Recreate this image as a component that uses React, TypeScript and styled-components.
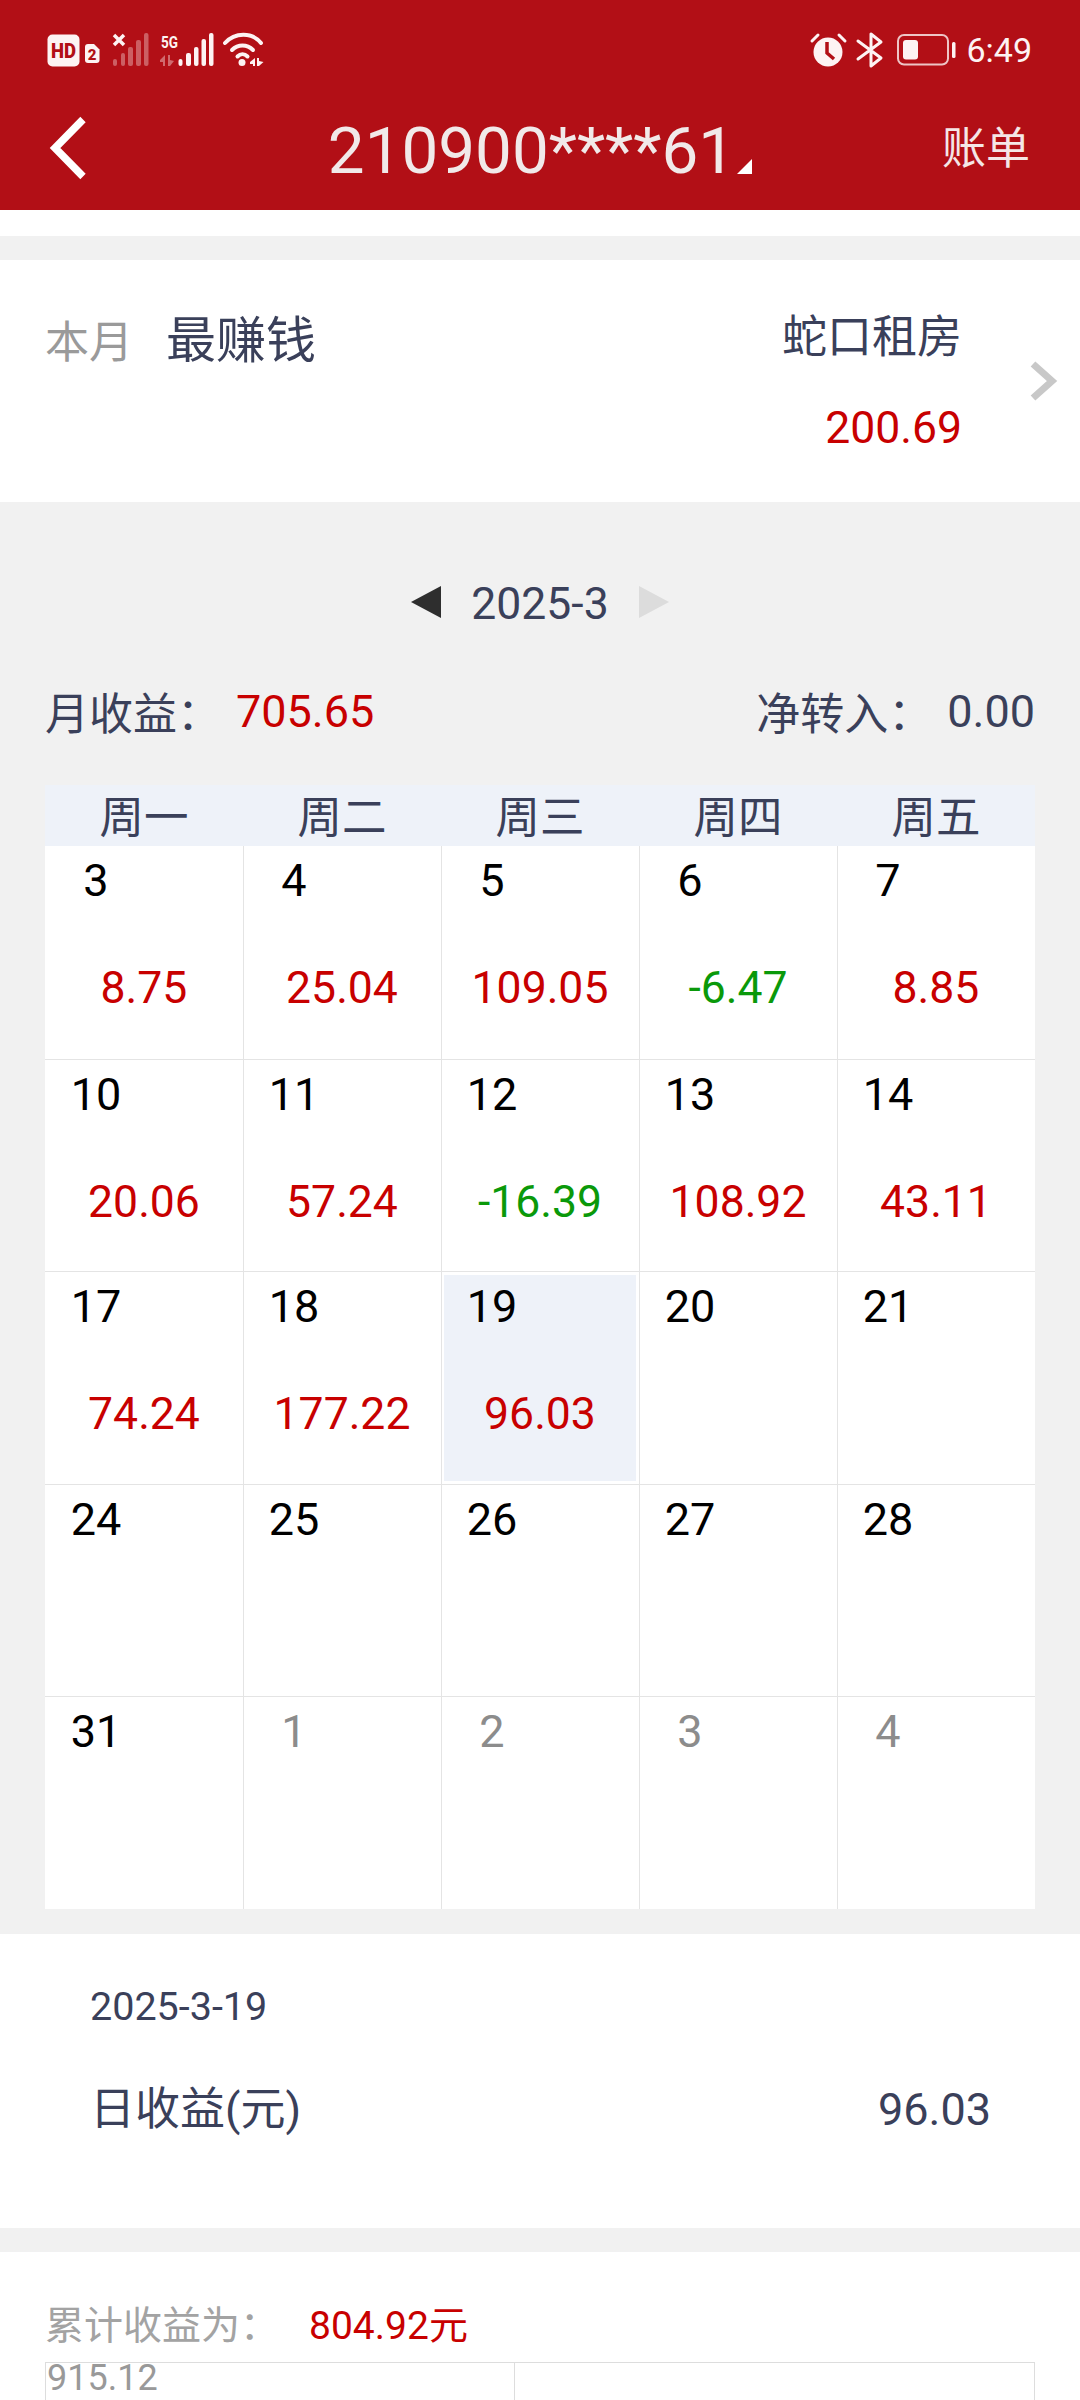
import React from "react";
import styled, { createGlobalStyle } from "styled-components";

const Global = createGlobalStyle`
  html, body { margin: 0; padding: 0; background: #f1f1f1; }
  body { font-family: Roboto, "Noto Sans CJK SC", sans-serif; }
  #root { width: 1080px; height: 2400px; overflow: hidden; }
`;

const NAVY = "#3a405a";
const RED = "#c80000";
const GREEN = "#0a990a";

const Page = styled.div`
  width: 1080px;
  height: 2400px;
  overflow: hidden;
  background: #f1f1f1;
  display: flex;
  flex-direction: column;
`;
const Header = styled.header`
  height: 210px;
  background: #b20f16;
  display: flex;
  flex-direction: column;
  flex: none;
`;
const StatusBar = styled.div`
  height: 100px;
  display: flex;
  align-items: center;
  justify-content: space-between;
  padding: 0 48px 0 47px;
`;
const StatusGroup = styled.div`
  display: flex;
  align-items: center;
`;
const Clock = styled.span`
  font-size: 34px;
  color: #fdf3f3;
  margin-left: 10px;
  line-height: 1;
`;
const Nav = styled.nav`
  height: 96px;
  display: flex;
  align-items: center;
  padding: 0 50px 0 49px;
`;
const Title = styled.div`
  flex: 1;
  display: flex;
  justify-content: center;
  align-items: flex-end;
  color: #f1e9e9;
  font-size: 65.500px;
  font-weight: 400;
  line-height: 72px;
  padding: 5px 0 0 51px;
`;
const Corner = styled.span`
  width: 0;
  height: 0;
  margin: 0 0 13px 2px;
  border-left: 15px solid transparent;
  border-bottom: 15px solid #fff;
`;
const NavAction = styled.span`
  font-size: 44px;
  color: #f5e6e6;
  line-height: 1;
  margin-top: 2px;
`;
const WhiteStrip = styled.div`
  height: 26px;
  background: #fff;
  flex: none;
`;
const BestCard = styled.section`
  margin-top: 24px;
  height: 242px;
  background: #fff;
  flex: none;
  display: flex;
  padding: 0 22px 0 45px;
  box-sizing: border-box;
`;
const BestLabel = styled.span`
  font-size: 44px;
  color: #9a9a9a;
  line-height: 60px;
  margin-top: 53px;
`;
const BestTitle = styled.span`
  font-size: 50px;
  color: ${NAVY};
  line-height: 60px;
  margin: 51px 0 0 33px;
`;
const BestRight = styled.div`
  margin-left: auto;
  display: flex;
  flex-direction: column;
  align-items: flex-end;
  padding-top: 48px;
`;
const BestName = styled.span`
  font-size: 45px;
  color: ${NAVY};
  line-height: 60px;
`;
const BestValue = styled.span`
  font-size: 44.500px;
  color: ${RED};
  line-height: 60px;
  margin-top: 30px;
`;
const BestChevron = styled.svg`
  width: 28px;
  height: 42px;
  margin: 100px 0 0 68px;
  flex: none;
`;
const CalendarArea = styled.section`
  flex: none;
  padding: 0 45px 25px;
  display: flex;
  flex-direction: column;
`;
const MonthPicker = styled.div`
  height: 60px;
  margin-top: 70px;
  display: flex;
  align-items: center;
  justify-content: center;
`;
const Arrow = styled.span<{ $dir: "l" | "r" }>`
  width: 0;
  height: 0;
  border-top: 16px solid transparent;
  border-bottom: 16px solid transparent;
  ${(p) =>
    p.$dir === "l"
      ? "border-right: 30px solid #2e2e2e;"
      : "border-left: 30px solid #dcdcdc;"}
`;
const MonthText = styled.span`
  font-size: 44.500px;
  color: ${NAVY};
  margin: 3px 30px 0;
  line-height: 60px;
`;
const SummaryRow = styled.div`
  height: 60px;
  margin-top: 49px;
  display: flex;
  align-items: center;
  justify-content: space-between;
`;
const SummaryItem = styled.div`
  display: flex;
  align-items: center;
  font-size: 44px;
  color: ${NAVY};
`;
const Value = styled.span<{ $red?: boolean; $gap: number }>`
  color: ${(p) => (p.$red ? RED : NAVY)};
  margin-left: ${(p) => p.$gap}px;
  font-size: 45px;
`;
const WeekHeader = styled.div`
  margin-top: 44px;
  height: 61px;
  background: #eef2f9;
  display: grid;
  grid-template-columns: repeat(5, 198px);
`;
const WeekDay = styled.span`
  font-size: 44.500px;
  line-height: 62px;
  padding-top: 2px;
  text-align: center;
  color: ${NAVY};
`;
const Grid = styled.div`
  display: grid;
  grid-template-columns: repeat(5, 198px);
  grid-auto-rows: 212.600px;
  background: #fff;
`;
const Cell = styled.div<{ $firstCol: boolean; $firstRow: boolean }>`
  box-sizing: border-box;
  padding: 3px 3px 3px 2px;
  ${(p) => (p.$firstCol ? "padding-left: 3px;" : "border-left: 1px solid #e4e4e4;")}
  ${(p) => (p.$firstRow ? "" : "border-top: 1px solid #e4e4e4;")}
`;
const CellInner = styled.div<{ $selected: boolean }>`
  height: 100%;
  display: flex;
  flex-direction: column;
  background: ${(p) => (p.$selected ? "#eef2f9" : "transparent")};
`;
const DayNum = styled.span<{ $muted: boolean }>`
  width: 96px;
  text-align: center;
  font-size: 45px;
  line-height: 60px;
  margin-top: 2px;
  color: ${(p) => (p.$muted ? "#8c8c8c" : "#000")};
`;
const Amount = styled.span<{ $neg: boolean }>`
  text-align: center;
  font-size: 44.500px;
  line-height: 60px;
  margin-top: 47px;
  color: ${(p) => (p.$neg ? GREEN : RED)};
`;
const DayCard = styled.section`
  height: 294px;
  background: #fff;
  flex: none;
  padding: 43px 89px 0 90px;
  box-sizing: border-box;
`;
const DayDate = styled.div`
  font-size: 39.500px;
  line-height: 60px;
  color: ${NAVY};
`;
const DayRow = styled.div`
  margin-top: 43px;
  display: flex;
  justify-content: space-between;
  font-size: 45px;
  line-height: 60px;
  color: ${NAVY};
`;
const TotalCard = styled.section`
  margin-top: 24px;
  flex: 1;
  background: #fff;
  padding: 44px 45px 0;
`;
const TotalRow = styled.div`
  display: flex;
  font-size: 39px;
  line-height: 60px;
  color: #a3a3a3;
`;
const TotalValue = styled.span`
  color: ${RED};
  margin-left: 30px;
`;
const Chart = styled.div`
  margin-top: 6px;
  height: 120px;
  border: 1px solid #dddddd;
  border-bottom: 0;
  display: grid;
  grid-template-columns: 468px 1fr;
`;
const ChartPane = styled.div`
  font-size: 36px;
  line-height: 30px;
  color: #999;
  padding-left: 1px;
  & + & {
    border-left: 1px solid #dddddd;
  }
`;

const fg = "#fdf3f3";

const LeftStatus = () => (
  <svg width="220" height="40" viewBox="47 30 220 40" fill={fg} style={{ display: "block" }}>
    <rect x="47.5" y="34.5" width="32" height="32" rx="5" />
    <text x="63.5" y="58" textAnchor="middle" fontFamily="Roboto" fontWeight="900" fontSize="21" textLength="25" lengthAdjust="spacingAndGlyphs" fill="#b20f16">HD</text>
    <path d="M85 47a3 3 0 0 1 3-3h6l5.500 5.500V60a3 3 0 0 1-3 3H88a3 3 0 0 1-3-3z" />
    <text x="92" y="60" textAnchor="middle" fontFamily="Roboto" fontWeight="900" fontSize="15" fill="#b20f16">2</text>
    <path d="M114 35l10 10M124 35l-10 10" stroke={fg} strokeWidth="3.500" />
    <g opacity=".35">
      <rect x="113" y="59" width="4" height="7" rx="2" />
      <rect x="121" y="53" width="4" height="13" rx="2" />
      <rect x="128" y="47" width="5" height="19" rx="2" />
      <rect x="136" y="40" width="5" height="26" rx="2" />
      <rect x="144" y="33" width="4.500" height="33" rx="2" />
    </g>
    <text x="169.500" y="47.500" textAnchor="middle" fontFamily="Roboto" fontWeight="700" fontSize="17" textLength="17" lengthAdjust="spacingAndGlyphs">5G</text>
    <g opacity=".4">
      <path d="M160 60l5-5v11h-2v-4h-3zM168 55h2v5l4 1-4 5h-2z" />
    </g>
    <rect x="178.500" y="59" width="4" height="7" rx="2" />
    <rect x="186" y="53" width="5" height="13" rx="2" />
    <rect x="194" y="47" width="4.500" height="19" rx="2" />
    <rect x="201.500" y="39" width="4.500" height="27" rx="2" />
    <rect x="209" y="33" width="4.500" height="33" rx="2" />
    <g fill="none" stroke={fg} strokeWidth="4" strokeLinecap="round">
      <path d="M225 43c10-11 27-11 36 0" />
      <path d="M232 50c6-6 15-6 21 0" />
      <path d="M237.500 56.500c3-3 7-3 10 0" />
    </g>
    <circle cx="242" cy="62.500" r="3.500" />
    <path d="M250 62l5-4v8h-2v-2h-3zM257 58h2v3l4.500 1-4.500 4h-2z" />
  </svg>
);

const RightStatus = () => (
  <svg width="147" height="40" viewBox="809 30 147 40" fill={fg} style={{ display: "block" }}>
    <circle cx="828" cy="52" r="14.500" />
    <path d="M827 42v11l7 6" fill="none" stroke="#b20f16" strokeWidth="3.500" />
    <path d="M812 41l6-6M845 41l-6-6" stroke={fg} strokeWidth="3" strokeLinecap="round" />
    <path d="M858 59l23-17-10-8v32l10-8-23-17" fill="none" stroke={fg} strokeWidth="3" strokeLinejoin="round" strokeLinecap="round" />
    <rect x="898" y="35" width="50" height="29.500" rx="6" fill="none" stroke={fg} strokeWidth="2" opacity=".8" />
    <rect x="903" y="40" width="15" height="19.500" rx="3" />
    <rect x="952" y="42" width="3.500" height="16" rx="1.500" />
  </svg>
);

const BackIcon = () => (
  <svg width="38" height="64" viewBox="0 0 38 64" style={{ display: "block" }}>
    <path d="M34 3.500L6 32l28 28.500" fill="none" stroke="#fff" strokeWidth="7.500" />
  </svg>
);

type Day = { d: number; v?: string; muted?: boolean };
const days: Day[] = [
  { d: 3, v: "8.75" }, { d: 4, v: "25.04" }, { d: 5, v: "109.05" }, { d: 6, v: "-6.47" }, { d: 7, v: "8.85" },
  { d: 10, v: "20.06" }, { d: 11, v: "57.24" }, { d: 12, v: "-16.39" }, { d: 13, v: "108.92" }, { d: 14, v: "43.11" },
  { d: 17, v: "74.24" }, { d: 18, v: "177.22" }, { d: 19, v: "96.03" }, { d: 20 }, { d: 21 },
  { d: 24 }, { d: 25 }, { d: 26 }, { d: 27 }, { d: 28 },
  { d: 31 }, { d: 1, muted: true }, { d: 2, muted: true }, { d: 3, muted: true }, { d: 4, muted: true },
];

export default function App() {
  return (
    <Page>
      <Global />
      <Header>
        <StatusBar>
          <LeftStatus />
          <StatusGroup>
            <RightStatus />
            <Clock>6:49</Clock>
          </StatusGroup>
        </StatusBar>
        <Nav>
          <BackIcon />
          <Title>
            210900****61
            <Corner />
          </Title>
          <NavAction>账单</NavAction>
        </Nav>
      </Header>
      <WhiteStrip />
      <BestCard>
        <BestLabel>本月</BestLabel>
        <BestTitle>最赚钱</BestTitle>
        <BestRight>
          <BestName>蛇口租房</BestName>
          <BestValue>200.69</BestValue>
        </BestRight>
        <BestChevron viewBox="0 0 28 42">
          <path d="M3 4l19 17L3 38" fill="none" stroke="#c8c8c8" strokeWidth="7" />
        </BestChevron>
      </BestCard>
      <CalendarArea>
        <MonthPicker>
          <Arrow $dir="l" />
          <MonthText>2025-3</MonthText>
          <Arrow $dir="r" />
        </MonthPicker>
        <SummaryRow>
          <SummaryItem>
            月收益：
            <Value $red $gap={15}>705.65</Value>
          </SummaryItem>
          <SummaryItem>
            净转入：
            <Value $gap={15}>0.00</Value>
          </SummaryItem>
        </SummaryRow>
        <WeekHeader>
          {["周一", "周二", "周三", "周四", "周五"].map((w) => (
            <WeekDay key={w}>{w}</WeekDay>
          ))}
        </WeekHeader>
        <Grid>
          {days.map((c, i) => (
            <Cell key={i} $firstCol={i % 5 === 0} $firstRow={i < 5}>
              <CellInner $selected={c.d === 19}>
                <DayNum $muted={!!c.muted}>{c.d}</DayNum>
                {c.v && <Amount $neg={c.v.startsWith("-")}>{c.v}</Amount>}
              </CellInner>
            </Cell>
          ))}
        </Grid>
      </CalendarArea>
      <DayCard>
        <DayDate>2025-3-19</DayDate>
        <DayRow>
          <span>日收益(元)</span>
          <span>96.03</span>
        </DayRow>
      </DayCard>
      <TotalCard>
        <TotalRow>
          累计收益为：
          <TotalValue>804.92元</TotalValue>
        </TotalRow>
        <Chart>
          <ChartPane>915.12</ChartPane>
          <ChartPane />
        </Chart>
      </TotalCard>
    </Page>
  );
}
